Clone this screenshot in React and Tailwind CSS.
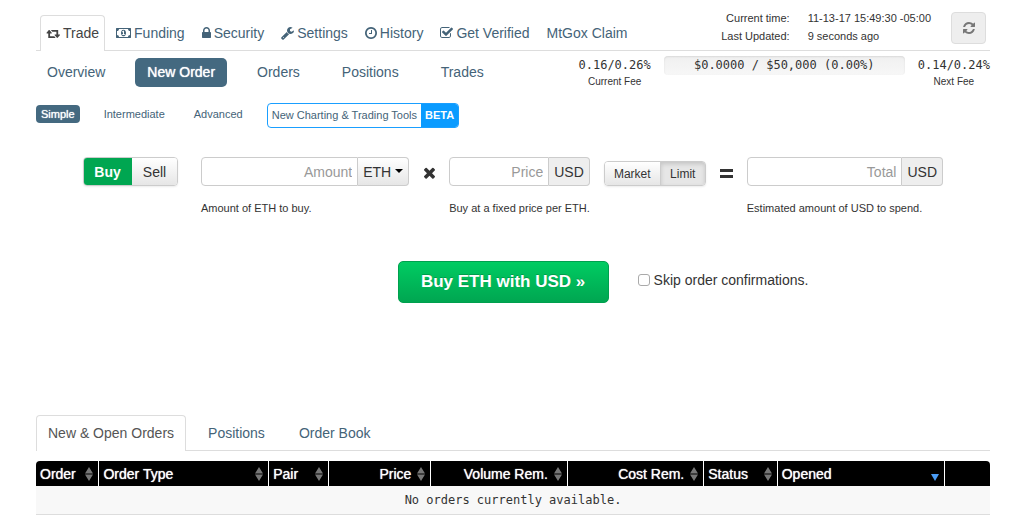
import React from "react";

const ICONS = {
  retweet: {
    box: "0 0 1984 1792",
    d: "M1344 1504q0 13-9.5 22.5t-22.5 9.5h-960q-8 0-13.5-2t-9-7-5.5-8-3-11.5-1-11.5v-600h-192q-26 0-45-19t-19-45q0-24 15-41l320-384q19-22 49-22t49 22l320 384q15 17 15 41 0 26-19 45t-45 19h-192v384h576q16 0 25 11l160 192q7 10 7 21zm640-416q0 24-15 41l-320 384q-20 23-49 23t-49-23l-320-384q-15-17-15-41 0-26 19-45t45-19h192v-384h-576q-16 0-25-12l-160-192q-7-9-7-20 0-13 9.5-22.5t22.5-9.5h960q8 0 13.5 2t9 7 5.5 8 3 11.5 1 11.5v600h192q26 0 45 19t19 45z",
  },
  money: {
    box: "0 0 1920 1792",
    d: "M768 1152h384v-96h-128v-448h-114l-148 137 77 80q42-37 55-57h2v288h-128v96zm512-256q0 70-21 142t-59.5 134-101.5 101-138 39-138-39-101.5-101-59.5-134-21-142 21-142 59.5-134 101.5-101 138-39 138 39 101.5 101 59.5 134 21 142zm512 256v-512q-106 0-181-75t-75-181h-1152q0 106-75 181t-181 75v512q106 0 181 75t75 181h1152q0-106 75-181t181-75zm128-832v1152q0 26-19 45t-45 19h-1792q-26 0-45-19t-19-45v-1152q0-26 19-45t45-19h1792q26 0 45 19t19 45z",
  },
  lock: {
    box: "320 0 1152 1792",
    d: "M640 768h512v-192q0-106-75-181t-181-75-181 75-75 181v192zm832 96v576q0 40-28 68t-68 28h-960q-40 0-68-28t-28-68v-576q0-40 28-68t68-28h32v-192q0-184 132-316t316-132 316 132 132 316v192h32q40 0 68 28t28 68z",
  },
  wrench: {
    box: "64 0 1664 1792",
    d: "M448 1472q0-26-19-45t-45-19-45 19-19 45 19 45 45 19 45-19 19-45zm644-420l-682 682q-37 37-90 37-52 0-91-37l-106-108q-38-36-38-90 0-53 38-91l681-681q39 98 114.5 173.5t173.5 114.5zm634-435q0 39-23 106-47 134-164.5 217.5t-258.5 83.5q-185 0-316.5-131.5t-131.5-316.5 131.5-316.5 316.5-131.5q58 0 121.5 16.5t107.5 46.5q16 11 16 28t-16 28l-293 169v224l193 107q5-3 79-48.5t135.5-81 70.5-35.5q15 0 23.5 10t8.5 25z",
  },
  clock: {
    box: "128 0 1536 1792",
    d: "M1024 544v448q0 14-9 23t-23 9h-320q-14 0-23-9t-9-23v-64q0-14 9-23t23-9h224v-352q0-14 9-23t23-9h64q14 0 23 9t9 23zm416 352q0-148-73-273t-198-198-273-73-273 73-198 198-73 273 73 273 198 198 273 73 273-73 198-198 73-273zm224 0q0 209-103 385.5t-279.5 279.5-385.5 103-385.5-103-279.5-279.5-103-385.5 103-385.5 279.5-279.5 385.5-103 385.5 103 279.5 279.5 103 385.5z",
  },
  check: {
    box: "64 0 1664 1792",
    d: "M1472 930v318q0 119-84.5 203.5t-203.5 84.5h-832q-119 0-203.5-84.5t-84.5-203.5v-832q0-119 84.5-203.5t203.5-84.5h832q63 0 117 25 15 7 18 23 3 17-9 29l-49 49q-10 10-23 10-3 0-9-2-23-6-45-6h-832q-66 0-113 47t-47 113v832q0 66 47 113t113 47h832q66 0 113-47t47-113v-254q0-13 9-22l64-64q10-10 23-10 6 0 12 3 20 8 20 29zm231-489l-814 814q-24 24-57 24t-57-24l-430-430q-24-24-24-57t24-57l110-110q24-24 57-24t57 24l263 263 647-647q24-24 57-24t57 24l110 110q24 24 24 57t-24 57z",
  },
  refresh: {
    box: "128 0 1536 1792",
    d: "M1639 1056q0 5-1 7-64 268-268 434.5t-478 166.5q-146 0-282.5-55t-243.5-157l-129 129q-19 19-45 19t-45-19-19-45v-448q0-26 19-45t45-19h448q26 0 45 19t19 45-19 45l-137 137q71 66 161 102t187 36q134 0 250-65t186-179q11-17 53-117 8-23 30-23h192q13 0 22.5 9.5t9.5 22.5zm25-800v448q0 26-19 45t-45 19h-448q-26 0-45-19t-19-45 19-45l138-138q-148-137-349-137-134 0-250 65t-186 179q-11 17-53 117-8 23-30 23h-199q-13 0-22.5-9.5t-9.5-22.5v-7q65-268 270-434.5t480-166.5q146 0 284 55.5t245 156.5l130-129q19-19 45-19t45 19 19 45z",
  },
  times: {
    box: "302 302 1188 1252",
    d: "M1490 1322q0 40-28 68l-136 136q-28 28-68 28t-68-28l-294-294-294 294q-28 28-68 28t-68-28l-136-136q-28-28-28-68t28-68l294-294-294-294q-28-28-28-68t28-68l136-136q28-28 68-28t68 28l294 294 294-294q28-28 68-28t68 28l136 136q28 28 28 68t-28 68l-294 294 294 294q28 28 28 68z",
  },
};

function Icon({ name, className }) {
  const icon = ICONS[name];
  return (
    <svg viewBox={icon.box} className={className} fill="currentColor" aria-hidden="true">
      <path d={icon.d} />
    </svg>
  );
}

const MAIN_TABS = [
  { label: "Trade", icon: "retweet", size: "h-[13px] w-[14px]", active: true },
  { label: "Funding", icon: "money", size: "h-[14px] w-[15px]" },
  { label: "Security", icon: "lock", size: "h-[14px] w-[9px]" },
  { label: "Settings", icon: "wrench", size: "h-[14px] w-[13px]" },
  { label: "History", icon: "clock", size: "h-[14px] w-[12px]" },
  { label: "Get Verified", icon: "check", size: "h-[14px] w-[13px]" },
  { label: "MtGox Claim" },
];

const SECTIONS = ["Overview", "New Order", "Orders", "Positions", "Trades"];
const MODES = ["Simple", "Intermediate", "Advanced"];

const COLUMNS = [
  { label: "Order", width: "w-[6.6%]" },
  { label: "Order Type", width: "w-[17.8%]" },
  { label: "Pair", width: "w-[6.3%]" },
  { label: "Price", width: "w-[10.7%]", right: true },
  { label: "Volume Rem.", width: "w-[14.3%]", right: true },
  { label: "Cost Rem.", width: "w-[14.3%]", right: true },
  { label: "Status", width: "w-[7.7%]" },
  { label: "Opened", width: "w-[17.5%]", sorted: true },
];

function Header() {
  return (
    <header className="flex items-end justify-between border-b border-[#ddd] pt-3">
      <nav className="-mb-px flex gap-[5px] pl-1">
        {MAIN_TABS.map((tab) => (
          <a
            key={tab.label}
            href="#"
            className={
              tab.active
                ? "flex h-9 items-center gap-[3px] rounded-t border border-b-0 border-[#ddd] bg-white px-[5px] pb-px text-[#444]"
                : "flex h-9 items-center gap-[3px] border border-transparent px-[5px]"
            }
          >
            {tab.icon && <Icon name={tab.icon} className={tab.size} />}
            {tab.label}
          </a>
        ))}
      </nav>
      <div className="flex items-start gap-5 self-start pr-1">
        <dl className="-mt-[3px] grid grid-cols-[auto_auto] gap-x-[18px] text-[11px] leading-[18px] text-[#333]">
          <dt className="text-right">Current time:</dt>
          <dd>11-13-17 15:49:30 -05:00</dd>
          <dt className="text-right">Last Updated:</dt>
          <dd>9 seconds ago</dd>
        </dl>
        <button
          type="button"
          aria-label="Refresh"
          className="mb-1.5 flex h-8 w-[35px] items-center justify-center rounded border border-[#ddd] bg-[#eee] text-[#777]"
        >
          <Icon name="refresh" className="h-3.5 w-3" />
        </button>
      </div>
    </header>
  );
}

function Fee({ value, label }) {
  return (
    <div className="text-center">
      <div className="font-['DejaVu_Sans_Mono',monospace] text-[12px] leading-[19px]">{value}</div>
      <div className="text-[10px] leading-[14px]">{label}</div>
    </div>
  );
}

function SectionBar() {
  return (
    <div className="flex items-start justify-between pt-[5px]">
      <nav className="-ml-px flex gap-[18px] pt-0.5">
        {SECTIONS.map((name) => (
          <a
            key={name}
            href="#"
            className={
              name === "New Order"
                ? "rounded-[5px] bg-[#446980] px-3 py-1 leading-[21px] text-white [text-shadow:0_0_1px_white]"
                : "px-3 py-1 leading-[21px]"
            }
          >
            {name}
          </a>
        ))}
      </nav>
      <div className="flex gap-[13px] text-[#333]">
        <Fee value="0.16/0.26%" label="Current Fee" />
        <div className="h-[19px] w-[241px] rounded bg-linear-to-b from-[#f0f0f0] to-[#f7f7f7] text-center font-['DejaVu_Sans_Mono',monospace] text-[12px] leading-[19px] shadow-[inset_0_1px_2px_rgba(0,0,0,0.1)]">
          $0.0000 / $50,000 (0.00%)
        </div>
        <Fee value="0.14/0.24%" label="Next Fee" />
      </div>
    </div>
  );
}

function ModeBar() {
  return (
    <nav className="flex items-start gap-[19px] pt-3.5 text-[11px]">
      {MODES.map((name) => (
        <a
          key={name}
          href="#"
          className={
            name === "Simple"
              ? "mt-0.5 rounded bg-[#446980] px-[5px] leading-[18px] text-white [text-shadow:0_0_1px_white]"
              : "mt-0.5 px-[5px] leading-[18px]"
          }
        >
          {name}
        </a>
      ))}
      <a href="#" className="flex h-[25px] overflow-hidden rounded border border-[#1a9fff] leading-[23px]">
        <span className="px-1">New Charting &amp; Trading Tools</span>
        <span className="bg-[#0a9bff] px-1 font-bold text-white">BETA</span>
      </a>
    </nav>
  );
}

function Field({ id, label, help, className, children }) {
  return (
    <div className={className}>
      <div className="flex h-[29px] text-[14px]">
        <input
          id={id}
          aria-label={label}
          placeholder={label}
          className="w-0 min-w-0 grow rounded-l border border-[#ccc] bg-white px-[5px] text-right text-[#333] placeholder:text-[#999]"
        />
        {children}
      </div>
      <label htmlFor={id} className="mt-3.5 block text-[11px] leading-4 whitespace-nowrap text-[#333]">
        {help}
      </label>
    </div>
  );
}

function Unit() {
  return (
    <span className="flex items-center rounded-r border border-l-0 border-[#ccc] bg-[#eee] px-[5px] text-[#333]">
      USD
    </span>
  );
}

function OrderForm() {
  return (
    <form className="pt-[29px]" onSubmit={(e) => e.preventDefault()}>
      <div className="flex items-start pr-[47px] pl-[47px]">
        <div className="mr-[23px] flex h-[29px] w-[95px] shrink-0 overflow-hidden rounded border border-[#ccc] text-[#333] shadow-[0_1px_2px_rgba(0,0,0,0.08)]">
          <button type="button" className="-my-px -ml-px w-[49px] bg-[#00a651] font-bold text-white">
            Buy
          </button>
          <button type="button" className="grow bg-linear-to-b from-white to-[#e6e6e6]">
            Sell
          </button>
        </div>

        <Field id="amount" label="Amount" help="Amount of ETH to buy." className="flex-[209_1_0%]">
          <div className="relative flex text-[#333]">
            <select
              aria-label="Currency"
              className="w-[51px] appearance-none rounded-r border border-l-0 border-[#ccc] bg-linear-to-b from-white to-[#e6e6e6] pr-4 pl-[5px]"
            >
              <option>ETH</option>
            </select>
            <svg
              viewBox="0 0 8 4"
              className="pointer-events-none absolute top-3 right-1.5 h-1 w-2"
              fill="#000"
              aria-hidden="true"
            >
              <path d="M0 0h8L4 4z" />
            </svg>
          </div>
        </Field>

        <span className="flex h-8 w-10 shrink-0 items-center justify-center text-[#333]">
          <Icon name="times" className="h-3 w-[11px]" />
        </span>

        <Field id="price" label="Price" help="Buy at a fixed price per ETH." className="flex-[139_1_0%]">
          <Unit />
        </Field>

        <div className="mt-1 ml-3.5 flex h-[25px] w-[102px] shrink-0 overflow-hidden rounded border border-[#ccc] text-[12px] text-[#333] shadow-[0_1px_2px_rgba(0,0,0,0.08)]">
          <button type="button" className="w-[55px] bg-linear-to-b from-white to-[#e6e6e6]">
            Market
          </button>
          <button
            type="button"
            className="grow border-l border-[#ccc] bg-[#e6e6e6] shadow-[inset_0_2px_4px_rgba(0,0,0,0.15)]"
          >
            Limit
          </button>
        </div>

        <span className="flex h-8 w-[41px] shrink-0 items-center justify-center text-[#333]">
          <svg viewBox="0 0 13 9" className="h-[9px] w-[13px]" fill="currentColor" aria-hidden="true">
            <path d="M0 0h13v3H0zM0 6h13v3H0z" />
          </svg>
        </span>

        <Field id="total" label="Total" help="Estimated amount of USD to spend." className="flex-[197_1_0%]">
          <Unit />
        </Field>
      </div>

      <div className="mt-[45px] flex items-center justify-center gap-[29px] pl-[180px]">
        <button
          type="submit"
          className="h-[42px] w-[211px] rounded-[5px] border border-[#00a04e] bg-linear-to-b from-[#00cc62] to-[#00a651] text-[17px] font-bold text-white [text-shadow:0_-1px_0_rgba(0,0,0,0.2)]"
        >
          Buy ETH with USD »
        </button>
        <label className="-mt-1 flex items-center gap-1 text-[#333]">
          <input
            type="checkbox"
            className="h-3 w-3 appearance-none rounded-[3px] border border-[#aaa] bg-white checked:bg-[#446980]"
          />
          Skip order confirmations.
        </label>
      </div>
    </form>
  );
}

function SortMark({ sorted }) {
  return sorted ? (
    <svg viewBox="0 0 8 14" className="h-3.5 w-2 shrink-0" fill="#4a9cf5" aria-hidden="true">
      <path d="M0 7h8L4 14z" />
    </svg>
  ) : (
    <svg viewBox="0 0 8 14" className="h-3.5 w-2 shrink-0" fill="#777" aria-hidden="true">
      <path d="M0 6.5h8L4 0zM0 7.5h8L4 14z" />
    </svg>
  );
}

function OrdersPanel() {
  return (
    <section className="pt-28">
      <nav className="flex gap-2.5 border-b border-[#ddd]">
        <a
          href="#"
          className="-mb-px flex h-9 items-center rounded-t border border-b-0 border-[#ddd] bg-white px-[11px] pb-px text-[#555]"
        >
          New &amp; Open Orders
        </a>
        <a href="#" className="flex items-center px-3">
          Positions
        </a>
        <a href="#" className="flex items-center px-3">
          Order Book
        </a>
      </nav>
      <div className="mt-2.5 overflow-hidden rounded-t">
        <table className="w-full table-fixed border-collapse">
          <thead className="bg-black text-white">
            <tr>
              {COLUMNS.map((col) => (
                <th
                  key={col.label}
                  className={`${col.width} h-[25px] border-r border-white pr-[5px] pl-1 font-normal`}
                >
                  <div className="flex items-center gap-1.5">
                    <span
                      className={
                        col.right
                          ? "grow text-right whitespace-nowrap [text-shadow:0_0_1px_white]"
                          : "grow text-left whitespace-nowrap [text-shadow:0_0_1px_white]"
                      }
                    >
                      {col.label}
                    </span>
                    <SortMark sorted={col.sorted} />
                  </div>
                </th>
              ))}
              <td />
            </tr>
          </thead>
          <tbody>
            <tr>
              <td
                colSpan={9}
                className="h-7 border-b border-[#ddd] bg-[#f8f8f8] text-center font-['DejaVu_Sans_Mono',monospace] text-[12px] text-[#333]"
              >
                No orders currently available.
              </td>
            </tr>
          </tbody>
        </table>
      </div>
    </section>
  );
}

export default function App() {
  return (
    <main className="bg-white pr-[34px] pl-9 font-['Liberation_Sans',Arial,sans-serif] text-[14px] leading-5 text-[#446378]">
      <Header />
      <SectionBar />
      <ModeBar />
      <OrderForm />
      <OrdersPanel />
    </main>
  );
}
